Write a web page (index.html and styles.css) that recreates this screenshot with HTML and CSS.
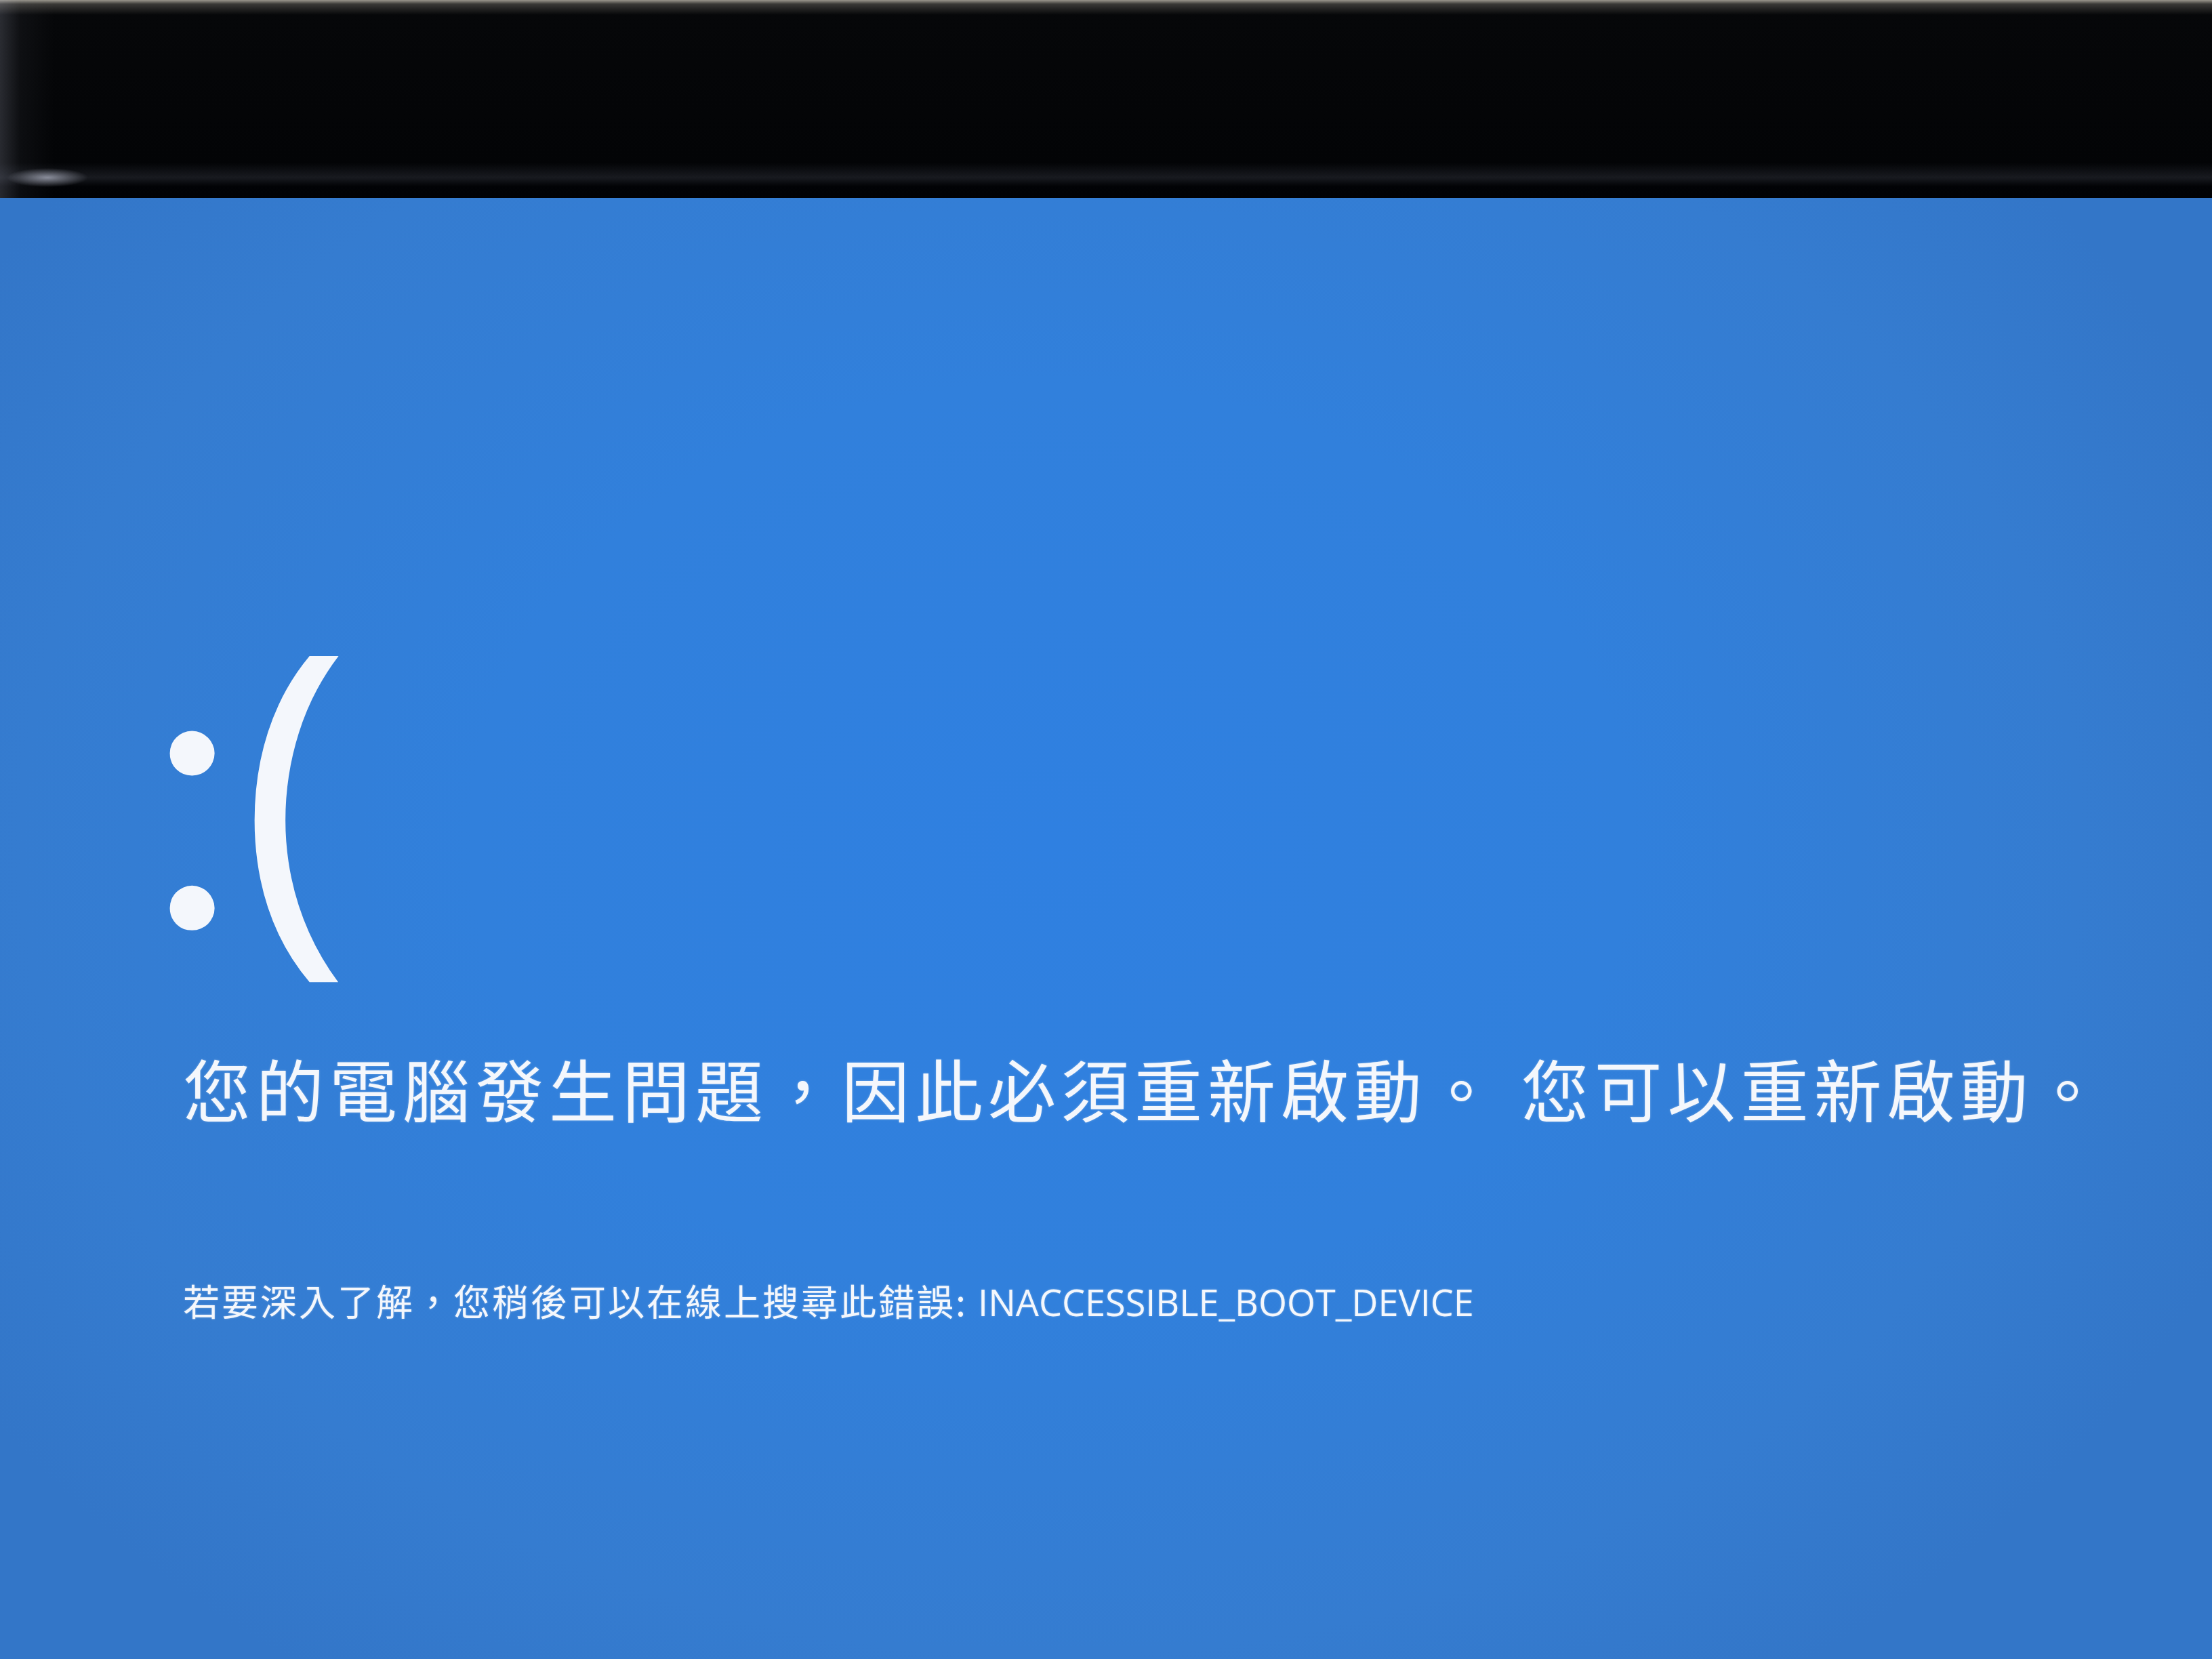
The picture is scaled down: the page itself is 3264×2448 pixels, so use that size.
FILE: index.html
```html
<!DOCTYPE html>
<html lang="zh-Hant">
<head>
<meta charset="utf-8">
<title>INACCESSIBLE_BOOT_DEVICE</title>
<link rel="stylesheet" href="styles.css">
</head>
<body>
<div class="bezel"></div>
<main class="screen">
  <div class="face"><span class="eyes">:</span><span class="mouth">(</span></div>
  <p class="headline">您的電腦發生問題，因此必須重新啟動。 您可以重新啟動。</p>
  <p class="details">若要深入了解，您稍後可以在線上搜尋此錯誤: <span class="code">INACCESSIBLE_BOOT_DEVICE</span></p>
</main>
</body>
</html>
```

FILE: styles.css
```css
html, body {
  margin: 0;
  width: 3264px;
  height: 2448px;
  overflow: hidden;
  background: #2f7cd5;
}

body {
  display: flex;
  flex-direction: column;
}

.bezel {
  height: 292px;
  flex: none;
  background:
    radial-gradient(ellipse 60px 14px at 70px 262px, rgba(230,235,255,0.55), rgba(230,235,255,0) 100%),
    linear-gradient(180deg, rgba(0,0,0,0) 240px, rgba(90,95,110,0.25) 262px, rgba(0,0,0,0) 275px),
    linear-gradient(90deg, rgba(170,175,195,0.22) 0, rgba(120,125,140,0.08) 30px, rgba(0,0,0,0) 80px),
    linear-gradient(180deg, #9a968c 0, #3a3936 6px, #060709 22px, #030406 240px, #010205 100%);
}

.screen {
  flex: 1;
  display: flex;
  flex-direction: column;
  align-items: flex-start;
  padding-left: 270px;
  color: #f4f7fc;
  background:
    radial-gradient(ellipse 1900px 1500px at 1550px 950px, #2f80e1 0, #3180dc 45%, #357cd0 80%, #3376c8 100%);
}

.face {
  margin-top: 562px;
  margin-left: -55px;
  height: 571px;
  white-space: nowrap;
  line-height: 1;
}

.eyes {
  font-family: "Lato", "Open Sans", sans-serif;
  font-size: 573px;
  font-weight: 300;
  -webkit-text-stroke: 13px #f4f7fc;
}

.mouth {
  font-family: "Open Sans", "DejaVu Sans", sans-serif;
  font-size: 552px;
  font-weight: 500;
  margin-left: 1px;
}

.headline {
  margin: 130px 0 0;
  font-family: "Noto Sans CJK TC", "Noto Sans CJK SC", sans-serif;
  font-size: 100px;
  line-height: 100px;
  letter-spacing: 8px;
  font-weight: 400;
  white-space: nowrap;
  text-shadow: 0 0 3px rgba(255,255,255,0.35);
}

.details {
  margin: 237px 0 0;
  font-family: "Noto Sans CJK TC", "Noto Sans CJK SC", sans-serif;
  font-size: 54px;
  line-height: 54px;
  letter-spacing: 3px;
  font-weight: 400;
  white-space: nowrap;
  text-shadow: 0 0 3px rgba(255,255,255,0.35);
}

.code {
  font-family: "Open Sans", "Noto Sans", sans-serif;
  letter-spacing: 0;
}
```
